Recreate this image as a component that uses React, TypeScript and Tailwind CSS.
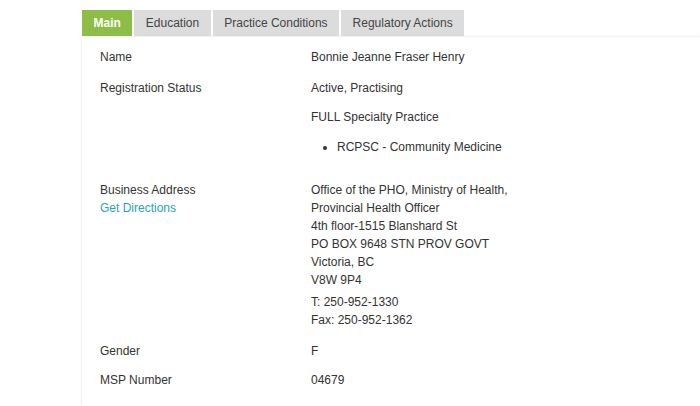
const TABS = ["Main", "Education", "Practice Conditions", "Regulatory Actions"];

function Row({ label, children, className = "" }: { label: React.ReactNode; children: React.ReactNode; className?: string }) {
  return (
    <div className={`flex ${className}`}>
      <div className="w-[211px] shrink-0">{label}</div>
      <div className="flex-1">{children}</div>
    </div>
  );
}

export default function App() {
  return (
    <div className="h-[406px] overflow-hidden bg-white pl-[82px] pt-[10px] font-['Liberation_Sans',Arial,sans-serif] text-[12px] leading-[18px] text-[#333]">
      {/* tabs */}
      <div className="flex gap-[2px]">
        {TABS.map((t, i) => (
          <div
            key={t}
            className={
              i === 0
                ? "h-[26px] px-[11.5px] flex items-center bg-[#8dbd47] text-white font-bold"
                : "h-[26px] px-[11.5px] flex items-center bg-[#dcdcdc] text-[#444]"
            }
          >
            {t}
          </div>
        ))}
      </div>

      {/* panel */}
      <div className="mt-px h-[369px] pl-[18px] pt-[11px] shadow-[0_0_3px_rgba(0,0,0,0.13)]">
        <Row label="Name" className="mb-[13px]">
          Bonnie Jeanne Fraser Henry
        </Row>
        <Row label="Registration Status" className="mb-[25px]">
          <p className="mb-[11px]">Active, Practising</p>
          <p className="mb-[12px]">FULL Specialty Practice</p>
          <ul className="list-disc pl-[26px]">
            <li>RCPSC - Community Medicine</li>
          </ul>
        </Row>
        <Row
          label={
            <>
              <div>Business Address</div>
              <div className="text-[#2ba3b4]">Get Directions</div>
            </>
          }
          className="mb-[13px]"
        >
          <p>Office of the PHO, Ministry of Health,</p>
          <p>Provincial Health Officer</p>
          <p>4th floor-1515 Blanshard St</p>
          <p>PO BOX 9648 STN PROV GOVT</p>
          <p>Victoria, BC</p>
          <p className="mb-[4px]">V8W 9P4</p>
          <p>T: 250-952-1330</p>
          <p>Fax: 250-952-1362</p>
        </Row>
        <Row label="Gender" className="mb-[11px]">
          F
        </Row>
        <Row label="MSP Number">04679</Row>
      </div>
    </div>
  );
}
